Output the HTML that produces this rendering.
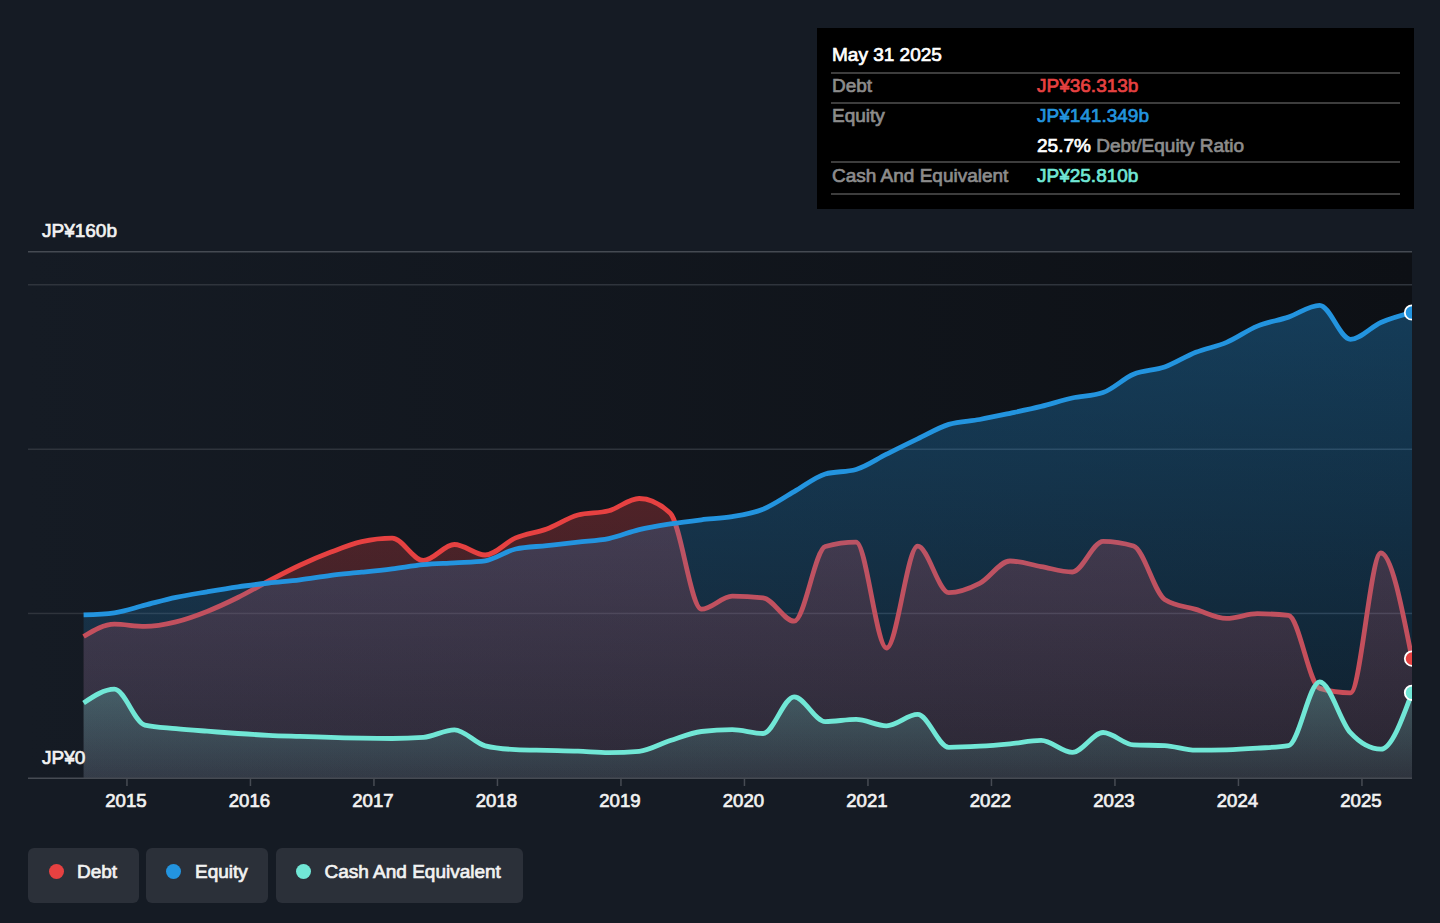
<!DOCTYPE html>
<html><head><meta charset="utf-8">
<style>
html,body{margin:0;padding:0;}
body{width:1440px;height:923px;overflow:hidden;background:#151b24;position:relative;font-family:"Liberation Sans",sans-serif;}
svg{position:absolute;left:0;top:0;}
.t{position:absolute;white-space:nowrap;line-height:1;}
#tip div,.bt{-webkit-text-stroke:0.7px currentColor;}
.val span{-webkit-text-stroke:0.7px #8c8c8c;}
#tip{position:absolute;left:817px;top:28px;width:597px;height:181px;background:#000;}
.sep{position:absolute;left:14px;width:569px;height:2px;background:#3d3d3d;}
.lbl{position:absolute;left:15px;color:#8c8c8c;font-size:19px;white-space:nowrap;line-height:1;}
.val{position:absolute;left:220px;font-size:19px;white-space:nowrap;line-height:1;}
.btn{position:absolute;top:847.5px;height:55.6px;background:#2b3039;border-radius:6px;}
.dot{position:absolute;top:16.5px;width:15px;height:15px;border-radius:50%;}
.bt{position:absolute;top:14px;color:#f2f2f2;font-size:19px;white-space:nowrap;line-height:1;}
</style></head><body>
<svg width="1440" height="923" viewBox="0 0 1440 923">
<defs>
<linearGradient id="ov" x1="28" y1="0" x2="1412" y2="0" gradientUnits="userSpaceOnUse">
<stop offset="0" stop-color="#151b24"/><stop offset="1" stop-color="#0d1015"/>
</linearGradient>
<linearGradient id="geq" x1="0" y1="305" x2="0" y2="778" gradientUnits="userSpaceOnUse">
<stop offset="0" stop-color="#2394df" stop-opacity="0.335"/><stop offset="1" stop-color="#2394df" stop-opacity="0.11"/>
</linearGradient>
<linearGradient id="gdebt" x1="0" y1="499" x2="0" y2="778" gradientUnits="userSpaceOnUse">
<stop offset="0" stop-color="#e64141" stop-opacity="0.29"/><stop offset="1" stop-color="#e64141" stop-opacity="0.13"/>
</linearGradient>
<linearGradient id="gcash" x1="0" y1="683" x2="0" y2="778" gradientUnits="userSpaceOnUse">
<stop offset="0" stop-color="#71e7d6" stop-opacity="0.25"/><stop offset="1" stop-color="#71e7d6" stop-opacity="0.08"/>
</linearGradient>
<clipPath id="cp"><rect x="28" y="240" width="1384" height="538"/></clipPath>
</defs>
<rect x="28" y="252" width="1384" height="526" fill="url(#ov)"/>
<rect x="28" y="251" width="1384" height="1.5" fill="#454a52"/>
<rect x="28" y="284" width="1384" height="1.5" fill="#2f343c"/>
<rect x="28" y="448.5" width="1384" height="1.5" fill="#2f343c"/>
<rect x="28" y="612.7" width="1384" height="1.5" fill="#2f343c"/>
<g clip-path="url(#cp)">
<path d="M83.60,636.50 C93.86,630.35 104.13,624.20 114.39,624.20 C124.54,624.20 134.69,626.40 144.84,626.40 C155.22,626.40 165.60,624.30 175.97,621.80 C186.35,619.30 196.72,615.48 207.10,611.40 C217.36,607.37 227.63,602.57 237.89,597.50 C248.16,592.43 258.42,586.34 268.68,581.00 C279.06,575.60 289.44,570.12 299.81,565.30 C310.19,560.48 320.56,556.05 330.94,552.10 C341.20,548.19 351.47,544.02 361.73,541.70 C371.88,539.41 382.03,538.20 392.18,538.20 C402.56,538.20 412.94,560.50 423.31,560.50 C433.69,560.50 444.07,544.50 454.44,544.50 C464.71,544.50 474.97,555.00 485.23,555.00 C495.38,555.00 505.53,542.23 515.69,537.90 C526.06,533.47 536.44,532.72 546.81,528.90 C557.19,525.08 567.57,517.83 577.94,515.00 C588.21,512.20 598.47,513.58 608.73,510.80 C618.88,508.05 629.04,498.50 639.19,498.50 C649.56,498.50 659.94,503.43 670.32,513.30 C680.69,523.17 691.07,609.20 701.44,609.20 C711.71,609.20 721.97,596.20 732.24,596.20 C742.50,596.20 752.76,596.73 763.03,597.80 C773.40,598.88 783.78,621.20 794.16,621.20 C804.53,621.20 814.91,549.47 825.28,546.50 C835.55,543.57 845.81,542.10 856.08,542.10 C866.23,542.10 876.38,648.00 886.53,648.00 C896.90,648.00 907.28,546.20 917.66,546.20 C928.03,546.20 938.41,592.60 948.79,592.60 C959.05,592.60 969.31,588.72 979.58,583.40 C989.73,578.14 999.88,561.00 1010.03,561.00 C1020.41,561.00 1030.78,564.77 1041.16,566.60 C1051.53,568.43 1061.91,572.00 1072.29,572.00 C1082.55,572.00 1092.81,541.40 1103.08,541.40 C1113.23,541.40 1123.38,542.93 1133.53,546.00 C1143.91,549.13 1154.28,592.73 1164.66,599.40 C1175.04,606.07 1185.41,606.22 1195.79,609.40 C1206.05,612.55 1216.32,618.40 1226.58,618.40 C1236.84,618.40 1247.11,613.70 1257.37,613.70 C1267.75,613.70 1278.12,614.27 1288.50,615.40 C1298.88,616.53 1309.25,685.43 1319.63,688.40 C1329.89,691.33 1340.15,692.80 1350.42,692.80 C1360.57,692.80 1370.72,553.00 1380.87,553.00 C1391.25,553.00 1401.62,605.80 1412.00,658.60 L1412.00,778 L83.60,778 Z" fill="url(#gdebt)"/>
<path d="M83.60,636.50 C93.86,630.35 104.13,624.20 114.39,624.20 C124.54,624.20 134.69,626.40 144.84,626.40 C155.22,626.40 165.60,624.30 175.97,621.80 C186.35,619.30 196.72,615.48 207.10,611.40 C217.36,607.37 227.63,602.57 237.89,597.50 C248.16,592.43 258.42,586.34 268.68,581.00 C279.06,575.60 289.44,570.12 299.81,565.30 C310.19,560.48 320.56,556.05 330.94,552.10 C341.20,548.19 351.47,544.02 361.73,541.70 C371.88,539.41 382.03,538.20 392.18,538.20 C402.56,538.20 412.94,560.50 423.31,560.50 C433.69,560.50 444.07,544.50 454.44,544.50 C464.71,544.50 474.97,555.00 485.23,555.00 C495.38,555.00 505.53,542.23 515.69,537.90 C526.06,533.47 536.44,532.72 546.81,528.90 C557.19,525.08 567.57,517.83 577.94,515.00 C588.21,512.20 598.47,513.58 608.73,510.80 C618.88,508.05 629.04,498.50 639.19,498.50 C649.56,498.50 659.94,503.43 670.32,513.30 C680.69,523.17 691.07,609.20 701.44,609.20 C711.71,609.20 721.97,596.20 732.24,596.20 C742.50,596.20 752.76,596.73 763.03,597.80 C773.40,598.88 783.78,621.20 794.16,621.20 C804.53,621.20 814.91,549.47 825.28,546.50 C835.55,543.57 845.81,542.10 856.08,542.10 C866.23,542.10 876.38,648.00 886.53,648.00 C896.90,648.00 907.28,546.20 917.66,546.20 C928.03,546.20 938.41,592.60 948.79,592.60 C959.05,592.60 969.31,588.72 979.58,583.40 C989.73,578.14 999.88,561.00 1010.03,561.00 C1020.41,561.00 1030.78,564.77 1041.16,566.60 C1051.53,568.43 1061.91,572.00 1072.29,572.00 C1082.55,572.00 1092.81,541.40 1103.08,541.40 C1113.23,541.40 1123.38,542.93 1133.53,546.00 C1143.91,549.13 1154.28,592.73 1164.66,599.40 C1175.04,606.07 1185.41,606.22 1195.79,609.40 C1206.05,612.55 1216.32,618.40 1226.58,618.40 C1236.84,618.40 1247.11,613.70 1257.37,613.70 C1267.75,613.70 1278.12,614.27 1288.50,615.40 C1298.88,616.53 1309.25,685.43 1319.63,688.40 C1329.89,691.33 1340.15,692.80 1350.42,692.80 C1360.57,692.80 1370.72,553.00 1380.87,553.00 C1391.25,553.00 1401.62,605.80 1412.00,658.60" fill="none" stroke="#e64141" stroke-width="4.8" stroke-linejoin="round"/>
<path d="M83.60,614.90 C93.86,614.55 104.13,614.20 114.39,612.80 C124.54,611.42 134.69,607.74 144.84,605.20 C155.22,602.61 165.60,599.63 175.97,597.40 C186.35,595.17 196.72,593.58 207.10,591.80 C217.36,590.04 227.63,588.27 237.89,586.80 C248.16,585.33 258.42,584.16 268.68,583.00 C279.06,581.83 289.44,581.08 299.81,579.80 C310.19,578.52 320.56,576.57 330.94,575.30 C341.20,574.04 351.47,573.29 361.73,572.20 C371.88,571.12 382.03,570.05 392.18,568.80 C402.56,567.52 412.94,565.60 423.31,564.60 C433.69,563.60 444.07,563.44 454.44,562.80 C464.71,562.17 474.97,562.13 485.23,560.80 C495.38,559.48 505.53,551.22 515.69,549.00 C526.06,546.73 536.44,546.75 546.81,545.60 C557.19,544.45 567.57,543.27 577.94,542.10 C588.21,540.94 598.47,540.71 608.73,538.60 C618.88,536.52 629.04,532.04 639.19,529.60 C649.56,527.11 659.94,525.53 670.32,523.90 C680.69,522.27 691.07,521.02 701.44,519.80 C711.71,518.59 721.97,518.37 732.24,516.60 C742.50,514.83 752.76,513.31 763.03,509.20 C773.40,505.05 783.78,497.57 794.16,491.70 C804.53,485.83 814.91,477.03 825.28,474.00 C835.55,471.00 845.81,472.50 856.08,469.50 C866.23,466.53 876.38,459.25 886.53,454.20 C896.90,449.04 907.28,443.87 917.66,438.90 C928.03,433.93 938.41,427.63 948.79,424.40 C959.05,421.20 969.31,421.36 979.58,419.50 C989.73,417.66 999.88,415.46 1010.03,413.30 C1020.41,411.09 1030.78,408.95 1041.16,406.40 C1051.53,403.85 1061.91,400.31 1072.29,398.00 C1082.55,395.72 1092.81,396.20 1103.08,392.60 C1113.23,389.04 1123.38,378.56 1133.53,374.30 C1143.91,369.94 1154.28,370.67 1164.66,367.00 C1175.04,363.33 1185.41,356.41 1195.79,352.30 C1206.05,348.23 1216.32,346.77 1226.58,342.40 C1236.84,338.03 1247.11,330.31 1257.37,326.10 C1267.75,321.85 1278.12,320.57 1288.50,317.10 C1298.88,313.63 1309.25,305.30 1319.63,305.30 C1329.89,305.30 1340.15,339.30 1350.42,339.30 C1360.57,339.30 1370.72,326.93 1380.87,322.50 C1391.25,317.97 1401.62,315.29 1412.00,312.60 L1412.00,778 L83.60,778 Z" fill="url(#geq)"/>
<path d="M83.60,614.90 C93.86,614.55 104.13,614.20 114.39,612.80 C124.54,611.42 134.69,607.74 144.84,605.20 C155.22,602.61 165.60,599.63 175.97,597.40 C186.35,595.17 196.72,593.58 207.10,591.80 C217.36,590.04 227.63,588.27 237.89,586.80 C248.16,585.33 258.42,584.16 268.68,583.00 C279.06,581.83 289.44,581.08 299.81,579.80 C310.19,578.52 320.56,576.57 330.94,575.30 C341.20,574.04 351.47,573.29 361.73,572.20 C371.88,571.12 382.03,570.05 392.18,568.80 C402.56,567.52 412.94,565.60 423.31,564.60 C433.69,563.60 444.07,563.44 454.44,562.80 C464.71,562.17 474.97,562.13 485.23,560.80 C495.38,559.48 505.53,551.22 515.69,549.00 C526.06,546.73 536.44,546.75 546.81,545.60 C557.19,544.45 567.57,543.27 577.94,542.10 C588.21,540.94 598.47,540.71 608.73,538.60 C618.88,536.52 629.04,532.04 639.19,529.60 C649.56,527.11 659.94,525.53 670.32,523.90 C680.69,522.27 691.07,521.02 701.44,519.80 C711.71,518.59 721.97,518.37 732.24,516.60 C742.50,514.83 752.76,513.31 763.03,509.20 C773.40,505.05 783.78,497.57 794.16,491.70 C804.53,485.83 814.91,477.03 825.28,474.00 C835.55,471.00 845.81,472.50 856.08,469.50 C866.23,466.53 876.38,459.25 886.53,454.20 C896.90,449.04 907.28,443.87 917.66,438.90 C928.03,433.93 938.41,427.63 948.79,424.40 C959.05,421.20 969.31,421.36 979.58,419.50 C989.73,417.66 999.88,415.46 1010.03,413.30 C1020.41,411.09 1030.78,408.95 1041.16,406.40 C1051.53,403.85 1061.91,400.31 1072.29,398.00 C1082.55,395.72 1092.81,396.20 1103.08,392.60 C1113.23,389.04 1123.38,378.56 1133.53,374.30 C1143.91,369.94 1154.28,370.67 1164.66,367.00 C1175.04,363.33 1185.41,356.41 1195.79,352.30 C1206.05,348.23 1216.32,346.77 1226.58,342.40 C1236.84,338.03 1247.11,330.31 1257.37,326.10 C1267.75,321.85 1278.12,320.57 1288.50,317.10 C1298.88,313.63 1309.25,305.30 1319.63,305.30 C1329.89,305.30 1340.15,339.30 1350.42,339.30 C1360.57,339.30 1370.72,326.93 1380.87,322.50 C1391.25,317.97 1401.62,315.29 1412.00,312.60" fill="none" stroke="#2394df" stroke-width="4.8" stroke-linejoin="round"/>
<path d="M83.60,702.90 C93.86,696.05 104.13,689.20 114.39,689.20 C124.54,689.20 134.69,722.82 144.84,725.10 C155.22,727.43 165.60,727.58 175.97,728.60 C186.35,729.62 196.72,730.38 207.10,731.20 C217.36,732.01 227.63,732.82 237.89,733.50 C248.16,734.18 258.42,734.82 268.68,735.30 C279.06,735.79 289.44,736.05 299.81,736.40 C310.19,736.75 320.56,737.10 330.94,737.40 C341.20,737.70 351.47,738.02 361.73,738.20 C371.88,738.38 382.03,738.50 392.18,738.50 C402.56,738.50 412.94,738.13 423.31,737.40 C433.69,736.67 444.07,729.80 454.44,729.80 C464.71,729.80 474.97,743.24 485.23,745.80 C495.38,748.33 505.53,749.08 515.69,749.60 C526.06,750.13 536.44,750.13 546.81,750.40 C557.19,750.67 567.57,750.81 577.94,751.20 C588.21,751.58 598.47,752.70 608.73,752.70 C618.88,752.70 629.04,752.23 639.19,751.30 C649.56,750.35 659.94,743.80 670.32,740.50 C680.69,737.20 691.07,732.71 701.44,731.50 C711.71,730.30 721.97,729.70 732.24,729.70 C742.50,729.70 752.76,733.50 763.03,733.50 C773.40,733.50 783.78,696.80 794.16,696.80 C804.53,696.80 814.91,721.60 825.28,721.60 C835.55,721.60 845.81,719.40 856.08,719.40 C866.23,719.40 876.38,725.80 886.53,725.80 C896.90,725.80 907.28,714.40 917.66,714.40 C928.03,714.40 938.41,747.30 948.79,747.30 C959.05,747.30 969.31,746.79 979.58,746.20 C989.73,745.62 999.88,744.75 1010.03,743.80 C1020.41,742.83 1030.78,740.40 1041.16,740.40 C1051.53,740.40 1061.91,752.30 1072.29,752.30 C1082.55,752.30 1092.81,732.50 1103.08,732.50 C1113.23,732.50 1123.38,744.44 1133.53,744.90 C1143.91,745.37 1154.28,745.13 1164.66,745.60 C1175.04,746.07 1185.41,750.20 1195.79,750.20 C1206.05,750.20 1216.32,750.07 1226.58,749.80 C1236.84,749.53 1247.11,748.89 1257.37,748.20 C1267.75,747.50 1278.12,747.33 1288.50,745.60 C1298.88,743.87 1309.25,681.80 1319.63,681.80 C1329.89,681.80 1340.15,721.58 1350.42,732.70 C1360.57,743.70 1370.72,749.20 1380.87,749.20 C1391.25,749.20 1401.62,721.00 1412.00,692.80 L1412.00,778 L83.60,778 Z" fill="url(#gcash)"/>
<path d="M83.60,702.90 C93.86,696.05 104.13,689.20 114.39,689.20 C124.54,689.20 134.69,722.82 144.84,725.10 C155.22,727.43 165.60,727.58 175.97,728.60 C186.35,729.62 196.72,730.38 207.10,731.20 C217.36,732.01 227.63,732.82 237.89,733.50 C248.16,734.18 258.42,734.82 268.68,735.30 C279.06,735.79 289.44,736.05 299.81,736.40 C310.19,736.75 320.56,737.10 330.94,737.40 C341.20,737.70 351.47,738.02 361.73,738.20 C371.88,738.38 382.03,738.50 392.18,738.50 C402.56,738.50 412.94,738.13 423.31,737.40 C433.69,736.67 444.07,729.80 454.44,729.80 C464.71,729.80 474.97,743.24 485.23,745.80 C495.38,748.33 505.53,749.08 515.69,749.60 C526.06,750.13 536.44,750.13 546.81,750.40 C557.19,750.67 567.57,750.81 577.94,751.20 C588.21,751.58 598.47,752.70 608.73,752.70 C618.88,752.70 629.04,752.23 639.19,751.30 C649.56,750.35 659.94,743.80 670.32,740.50 C680.69,737.20 691.07,732.71 701.44,731.50 C711.71,730.30 721.97,729.70 732.24,729.70 C742.50,729.70 752.76,733.50 763.03,733.50 C773.40,733.50 783.78,696.80 794.16,696.80 C804.53,696.80 814.91,721.60 825.28,721.60 C835.55,721.60 845.81,719.40 856.08,719.40 C866.23,719.40 876.38,725.80 886.53,725.80 C896.90,725.80 907.28,714.40 917.66,714.40 C928.03,714.40 938.41,747.30 948.79,747.30 C959.05,747.30 969.31,746.79 979.58,746.20 C989.73,745.62 999.88,744.75 1010.03,743.80 C1020.41,742.83 1030.78,740.40 1041.16,740.40 C1051.53,740.40 1061.91,752.30 1072.29,752.30 C1082.55,752.30 1092.81,732.50 1103.08,732.50 C1113.23,732.50 1123.38,744.44 1133.53,744.90 C1143.91,745.37 1154.28,745.13 1164.66,745.60 C1175.04,746.07 1185.41,750.20 1195.79,750.20 C1206.05,750.20 1216.32,750.07 1226.58,749.80 C1236.84,749.53 1247.11,748.89 1257.37,748.20 C1267.75,747.50 1278.12,747.33 1288.50,745.60 C1298.88,743.87 1309.25,681.80 1319.63,681.80 C1329.89,681.80 1340.15,721.58 1350.42,732.70 C1360.57,743.70 1370.72,749.20 1380.87,749.20 C1391.25,749.20 1401.62,721.00 1412.00,692.80" fill="none" stroke="#71e7d6" stroke-width="4.8" stroke-linejoin="round"/>
<circle cx="1412" cy="312.5" r="7.2" fill="#2394df" stroke="#fff" stroke-width="1.8"/>
<circle cx="1412" cy="658.6" r="7.2" fill="#e64141" stroke="#fff" stroke-width="1.8"/>
<circle cx="1412" cy="692.8" r="7.2" fill="#71e7d6" stroke="#fff" stroke-width="1.8"/>
</g>
<rect x="28" y="777.5" width="1384" height="1.5" fill="#464b53"/>
<g fill="#464b53">
<rect x="126.2" y="778" width="1.5" height="8"/>
<rect x="249.7" y="778" width="1.5" height="8"/>
<rect x="373.2" y="778" width="1.5" height="8"/>
<rect x="496.7" y="778" width="1.5" height="8"/>
<rect x="620.2" y="778" width="1.5" height="8"/>
<rect x="743.7" y="778" width="1.5" height="8"/>
<rect x="867.2" y="778" width="1.5" height="8"/>
<rect x="990.7" y="778" width="1.5" height="8"/>
<rect x="1114.2" y="778" width="1.5" height="8"/>
<rect x="1237.7" y="778" width="1.5" height="8"/>
<rect x="1361.2" y="778" width="1.5" height="8"/>
</g>
<g font-family="Liberation Sans" font-size="18.6" fill="#f2f2f2" stroke="#f2f2f2" stroke-width="0.7" text-anchor="middle">
<text x="125.9" y="807">2015</text>
<text x="249.4" y="807">2016</text>
<text x="372.9" y="807">2017</text>
<text x="496.4" y="807">2018</text>
<text x="619.9" y="807">2019</text>
<text x="743.4" y="807">2020</text>
<text x="866.9" y="807">2021</text>
<text x="990.4" y="807">2022</text>
<text x="1113.9" y="807">2023</text>
<text x="1237.4" y="807">2024</text>
<text x="1360.9" y="807">2025</text>
</g>
<g font-family="Liberation Sans" font-size="19" fill="#f2f2f2" stroke="#f2f2f2" stroke-width="0.7">
<text x="42" y="237">JP¥160b</text>
<text x="42" y="763.5">JP¥0</text>
</g>
</svg>
<div id="tip">
<div class="t" style="left:15px;top:17px;color:#fff;font-size:19px;">May 31 2025</div>
<div class="sep" style="top:44px"></div>
<div class="lbl" style="top:48px">Debt</div>
<div class="val" style="top:48px;color:#e64141">JP¥36.313b</div>
<div class="sep" style="top:73.7px"></div>
<div class="lbl" style="top:78px">Equity</div>
<div class="val" style="top:78px;color:#2394df">JP¥141.349b</div>
<div class="val" style="top:108px;color:#fff">25.7% <span style="color:#8c8c8c">Debt/Equity Ratio</span></div>
<div class="sep" style="top:133.2px"></div>
<div class="lbl" style="top:137.5px">Cash And Equivalent</div>
<div class="val" style="top:137.5px;color:#71e7d6">JP¥25.810b</div>
<div class="sep" style="top:164.8px"></div>
</div>
<div class="btn" style="left:28px;width:111px"><div class="dot" style="left:21px;background:#e64141"></div><div class="bt" style="left:49px">Debt</div></div>
<div class="btn" style="left:146px;width:122px"><div class="dot" style="left:20px;background:#2394df"></div><div class="bt" style="left:49px">Equity</div></div>
<div class="btn" style="left:275.5px;width:247px"><div class="dot" style="left:20px;background:#71e7d6"></div><div class="bt" style="left:49px">Cash And Equivalent</div></div>
</body></html>
